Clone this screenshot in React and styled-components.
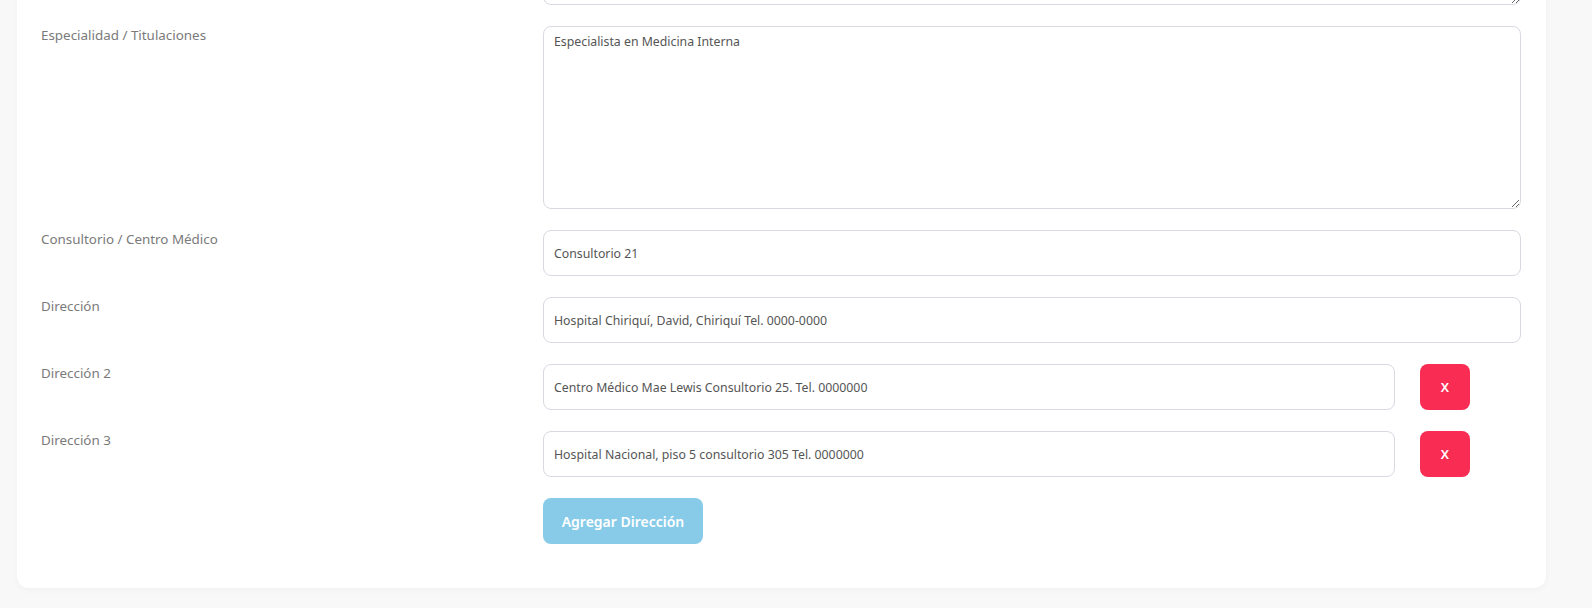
import React from 'react';
import styled, { createGlobalStyle } from 'styled-components';

const GlobalStyle = createGlobalStyle`
    html, body {
        margin: 0;
        padding: 0;
        width: 1592px;
        height: 608px;
        overflow: hidden;
        background-color: #f8f8f8;
        font-family: "Noto Sans", "Open Sans", sans-serif;
    }
`;

const Page = styled.div`
    padding: 0 46px 0 17px;
    margin-top: -40px;
`;

const Card = styled.div`
    box-sizing: border-box;
    width: 1529px;
    background-color: #ffffff;
    border-radius: 12px;
    box-shadow: 0 2px 6px rgba(0, 0, 0, 0.03);
    padding: 0 25px 44px 24px;
`;

const Row = styled.div`
    display: grid;
    grid-template-columns: 502px 978px;
    margin-bottom: 21px;
    &:last-child {
        margin-bottom: 0;
    }
`;

const Label = styled.label`
    font-size: 13.4px;
    line-height: 18px;
    color: #7a7a7a;
`;

const Field = styled.div`
    display: flex;
    align-items: flex-start;
    gap: 25px;
`;

const Input = styled.input`
    flex: 1;
    min-width: 0;
    box-sizing: border-box;
    height: 46px;
    padding: 0 10px;
    border: 1px solid #d9d9e3;
    border-radius: 8px;
    font-family: inherit;
    font-size: 12.3px;
    color: #555555;
    outline: none;
`;

const TextArea = styled.textarea`
    display: block;
    width: 100%;
    box-sizing: border-box;
    height: ${props => props.height || 183}px;
    padding: 6px 10px;
    border: 1px solid #d9d9e3;
    border-radius: 8px;
    font-family: inherit;
    font-size: 12.3px;
    color: #555555;
    outline: none;
`;

const RemoveButton = styled.button`
    flex: none;
    width: 50px;
    height: 46px;
    margin-right: 51px;
    border: none;
    border-radius: 8px;
    background-color: #f92c53;
    color: #ffffff;
    font-family: inherit;
    font-size: 13px;
    font-weight: 600;
`;

const AddButton = styled.button`
    width: 160px;
    height: 46px;
    border: none;
    border-radius: 8px;
    background-color: #87cbe8;
    color: #ffffff;
    font-family: inherit;
    font-size: 14px;
    font-weight: 600;
`;

const addresses = [
    { label: 'Dirección 2', value: 'Centro Médico Mae Lewis Consultorio 25. Tel. 0000000' },
    { label: 'Dirección 3', value: 'Hospital Nacional, piso 5 consultorio 305 Tel. 0000000' },
];

const App = () => (
    <>
        <GlobalStyle />
        <Page>
            <Card>
                <Row>
                    <Label />
                    <TextArea height={45} defaultValue="" />
                </Row>
                <Row>
                    <Label>Especialidad / Titulaciones</Label>
                    <TextArea defaultValue="Especialista en Medicina Interna" />
                </Row>
                <Row>
                    <Label>Consultorio / Centro Médico</Label>
                    <Field>
                        <Input defaultValue="Consultorio 21" />
                    </Field>
                </Row>
                <Row>
                    <Label>Dirección</Label>
                    <Field>
                        <Input defaultValue="Hospital Chiriquí, David, Chiriquí Tel. 0000-0000" />
                    </Field>
                </Row>
                {addresses.map(a => (
                    <Row key={a.label}>
                        <Label>{a.label}</Label>
                        <Field>
                            <Input defaultValue={a.value} />
                            <RemoveButton>X</RemoveButton>
                        </Field>
                    </Row>
                ))}
                <Row>
                    <Label />
                    <Field>
                        <AddButton>Agregar Dirección</AddButton>
                    </Field>
                </Row>
            </Card>
        </Page>
    </>
);

export default App;
